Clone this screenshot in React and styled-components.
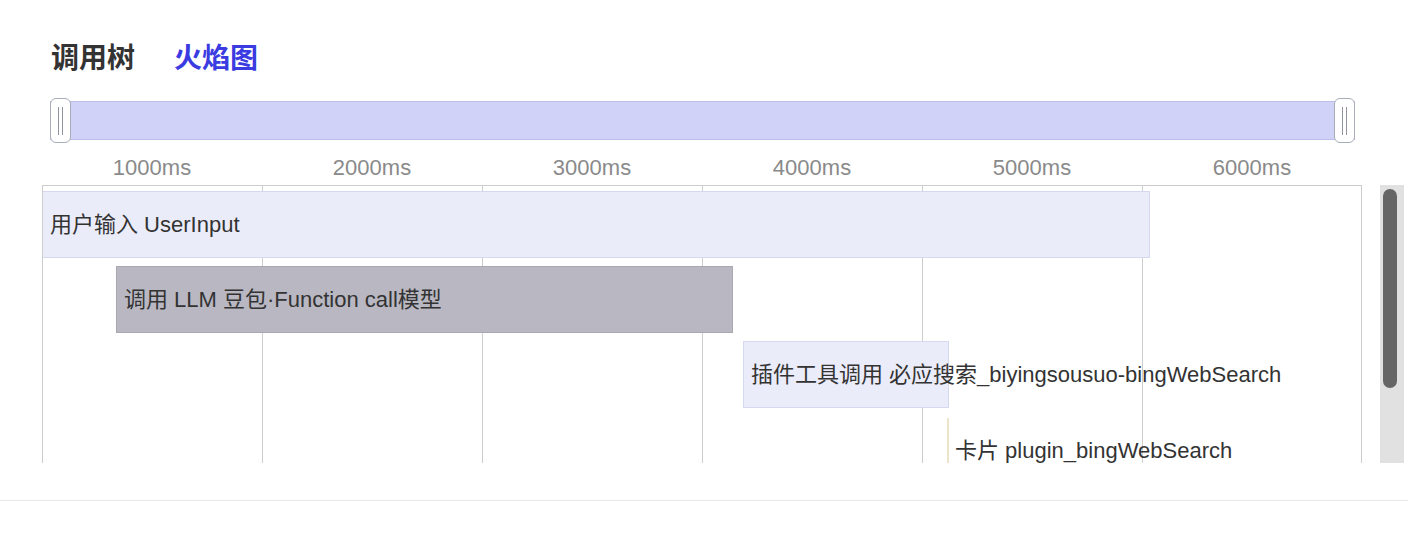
import styled, { createGlobalStyle } from "styled-components";

const PX_PER_MS = 0.22;

const spans = [
  { id: 1, label: "用户输入 UserInput", start: 0, duration: 5036, kind: "input" },
  { id: 2, label: "调用 LLM 豆包·Function call模型", start: 336, duration: 2805, kind: "llm" },
  { id: 3, label: "插件工具调用 必应搜索_biyingsousuo-bingWebSearch", start: 3186, duration: 936, kind: "input" },
  { id: 4, label: "卡片 plugin_bingWebSearch", start: 4114, duration: 9, kind: "card" },
];

const ticks = ["1000ms", "2000ms", "3000ms", "4000ms", "5000ms", "6000ms"];

const GlobalStyle = createGlobalStyle`
  html, body {
    margin: 0;
    padding: 0;
    background: #ffffff;
  }
  body {
    font-family: "Liberation Sans", "Noto Sans CJK SC", sans-serif;
    color: #333333;
  }
`;

const Page = styled.div`
  width: 1408px;
  height: 534px;
  overflow: hidden;
  background: #fff;
`;

const Content = styled.div`
  padding: 39px 0 0 42px;
`;

const Tabs = styled.div`
  display: flex;
  gap: 39px;
  margin-left: 9px;
  height: 40px;
`;

const Tab = styled.div`
  font-size: 28px;
  line-height: 40px;
  font-weight: 600;
  color: ${(p) => (p.$active ? "#3b3be2" : "#333333")};
  cursor: pointer;
`;

const Slider = styled.div`
  margin: 22px 0 0 8px;
  width: 1305px;
  height: 39px;
  box-sizing: border-box;
  background: #d0d3f7;
  border: 1px solid #babee9;
  display: flex;
  justify-content: space-between;
  align-items: center;
`;

const Handle = styled.div`
  width: 21px;
  height: 45px;
  flex: none;
  box-sizing: border-box;
  margin: 0 -1px;
  background: #fff;
  border: 1.5px solid #a7acb6;
  border-radius: 6px;
  display: flex;
  justify-content: center;
  align-items: center;
  gap: 3px;
`;

const Grip = styled.span`
  width: 1px;
  height: 28px;
  background: #8f949e;
`;

const Ruler = styled.div`
  display: grid;
  grid-template-columns: repeat(6, 220px);
  height: 45px;
  padding-top: 11px;
  box-sizing: border-box;
`;

const Tick = styled.div`
  text-align: center;
  font-size: 22px;
  line-height: 34px;
  color: #8a8a8a;
`;

const ChartRow = styled.div`
  display: flex;
  gap: 18px;
  height: 278px;
`;

const Chart = styled.div`
  width: 1320px;
  flex: none;
  box-sizing: border-box;
  border: 1px solid #cccccc;
  border-bottom: none;
  overflow: hidden;
  background: repeating-linear-gradient(
    to right,
    transparent 0 219px,
    #cccccc 219px 220px
  );
`;

const Rows = styled.div`
  display: flex;
  flex-direction: column;
  gap: 8px;
  padding-top: 5px;
`;

const Row = styled.div`
  height: 67px;
  display: flex;
  align-items: stretch;
`;

const barTheme = {
  input: { bg: "#ebecf9", border: "#d5d8ef" },
  llm: { bg: "#b9b8c2", border: "#a8a8b1" },
  card: { bg: "#ece5cc", border: "#ece5cc" },
};

const Bar = styled.div`
  flex: none;
  box-sizing: border-box;
  background: ${(p) => barTheme[p.$kind].bg};
  border: 1px solid ${(p) => barTheme[p.$kind].border};
  ${(p) => p.$kind === "card" && "border-width: 0 1px; margin-top: 2px;"}
  display: flex;
  align-items: center;
  overflow: visible;
`;

const BarLabel = styled.span`
  padding: 1px 0 0 7px;
  white-space: nowrap;
  font-size: 22px;
  line-height: 26px;
  color: #333333;
`;

const ScrollTrack = styled.div`
  width: 24px;
  flex: none;
  background: #e1e1e1;
  padding: 4px 3px 0;
  box-sizing: border-box;
`;

const ScrollThumb = styled.div`
  width: 14px;
  height: 199px;
  border-radius: 7px;
  background: #666666;
`;

const Divider = styled.div`
  margin-top: 37px;
  height: 1px;
  background: #e8e8e8;
`;

export default function App() {
  return (
    <Page>
      <GlobalStyle />
      <Content>
        <Tabs>
          <Tab>调用树</Tab>
          <Tab $active>火焰图</Tab>
        </Tabs>
        <Slider>
          <Handle>
            <Grip />
            <Grip />
          </Handle>
          <Handle>
            <Grip />
            <Grip />
          </Handle>
        </Slider>
        <Ruler>
          {ticks.map((t) => (
            <Tick key={t}>{t}</Tick>
          ))}
        </Ruler>
        <ChartRow>
          <Chart>
            <Rows>
              {spans.map((s) => (
                <Row key={s.id}>
                  <Bar
                    $kind={s.kind}
                    style={{
                      marginLeft: Math.round(s.start * PX_PER_MS) - 1,
                      width: Math.max(2, Math.round(s.duration * PX_PER_MS)),
                    }}
                  >
                    <BarLabel>{s.label}</BarLabel>
                  </Bar>
                </Row>
              ))}
            </Rows>
          </Chart>
          <ScrollTrack>
            <ScrollThumb />
          </ScrollTrack>
        </ChartRow>
      </Content>
      <Divider />
    </Page>
  );
}
